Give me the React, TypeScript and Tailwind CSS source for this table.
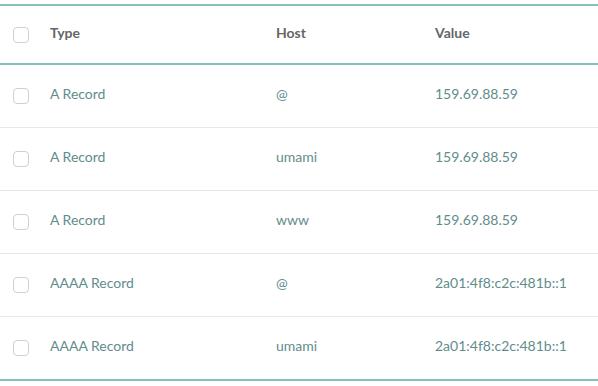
import React from "react";

const rows = [
  { type: "A Record", host: "@", value: "159.69.88.59" },
  { type: "A Record", host: "umami", value: "159.69.88.59" },
  { type: "A Record", host: "www", value: "159.69.88.59" },
  { type: "AAAA Record", host: "@", value: "2a01:4f8:c2c:481b::1" },
  { type: "AAAA Record", host: "umami", value: "2a01:4f8:c2c:481b::1" },
];

function Box() {
  return (
    <span className="block w-4 h-4 rounded-[4px] border border-[#d0d0d0] bg-white" />
  );
}

export default function App() {
  return (
    <div
      className="w-[598px] h-[386px] bg-white pt-1"
      style={{ fontFamily: "Lato, 'Open Sans', sans-serif" }}
    >
      <div className="border-t-2 border-b-2 border-[#86bfbc]">
        <div className="grid grid-cols-[50px_226px_159px_1fr] h-[59px] items-center border-b-2 border-[#86bfbc] text-[14px] font-bold text-[#666666]">
          <div className="pl-[13px]"><Box /></div>
          <div className="pb-1">Type</div>
          <div className="pb-1">Host</div>
          <div className="pb-1">Value</div>
        </div>
        {rows.map((r, i) => (
          <div
            key={i}
            className={`grid grid-cols-[50px_226px_159px_1fr] items-center text-[14px] text-[#5f8d8c] ${
              i < rows.length - 1 ? "h-[63px] border-b border-[#e8e8e8]" : "h-[62px]"
            }`}
          >
            <div className="pl-[13px]"><Box /></div>
            <div className="pb-[5px]">{r.type}</div>
            <div className="pb-[5px]">{r.host}</div>
            <div className="pb-[5px]">{r.value}</div>
          </div>
        ))}
      </div>
    </div>
  );
}
